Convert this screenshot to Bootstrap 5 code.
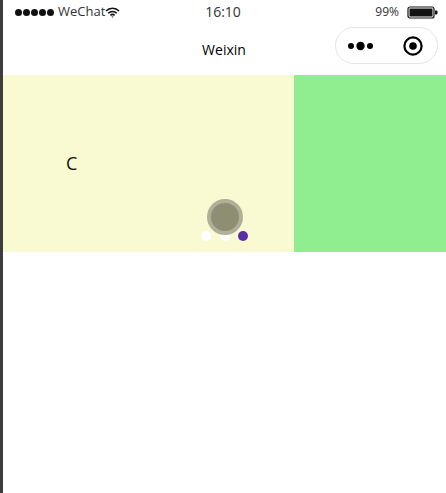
<!DOCTYPE html>
<html lang="en">
<head>
    <meta charset="UTF-8">
    <meta name="viewport" content="width=device-width, initial-scale=1">
    <title>Weixin</title>
    <link rel="stylesheet" href="https://cdn.jsdelivr.net/npm/bootstrap@5.3.0/dist/css/bootstrap.min.css">
    <style>
        html, body { height: 100%; }
        body { font-family: "Open Sans", "Noto Sans", sans-serif; color: #111; background: #fff; overflow: hidden; }
        .phone { height: 493px; border-left: 3px solid #3d3d3d; }
        .status-bar { height: 24px; font-size: 13px; color: #333; padding: 0 8px 0 12px; }
        .signal { gap: 1px; }
        .signal i { width: 7px; height: 7px; border-radius: 50%; background: #111; display: block; }
        .status-time { left: 0; right: 0; top: 0; line-height: 24px; font-size: 14px; margin-left: -3px; }
        .batt-pct { font-size: 12px; }
        .nav-bar { height: 51px; }
        .nav-title { font-size: 14px; line-height: 52px; margin-left: -1px; color: #000; }
        .capsule { right: 8px; top: 3px; width: 103px; height: 37px; border: 1px solid #e4e4e4; border-radius: 19px; padding: 0 14px 0 11px; }
        .swiper-box { height: 177px; }
        .slide-a { width: 291px; background: #fafad2; font-size: 18px; padding: 76px 0 0 63px; line-height: 24px; color: #111; }
        .slide-b { background: #90ee90; }
        .swiper-dots { left: 198px; top: 156px; gap: 8.5px; }
        .swiper-dots i { width: 10px; height: 10px; border-radius: 50%; background: #fff; display: block; }
        .swiper-dots i.on { background: #5a2ea6; }
        .touch-spot { left: 204px; top: 124px; width: 36px; height: 36px; border-radius: 50%; background: #8e8e72; border: 4px solid #b0b09a; }
    </style>
</head>
<body>
    <div class="phone">
        <div class="status-bar d-flex align-items-center position-relative">
            <div class="signal d-flex"><i></i><i></i><i></i><i></i><i></i></div>
            <span class="ms-1">WeChat</span>
            <svg width="15" height="11" viewBox="0 0 15 11" fill="none" stroke="#111" stroke-width="1.6"><path d="M1 4a9 9 0 0 1 13 0"/><path d="M3.2 6.3a6 6 0 0 1 8.6 0"/><path d="M5.4 8.4a3 3 0 0 1 4.2 0"/><path d="M6.4 9.6l1.1 1.1 1.1-1.1z" fill="#111" stroke="none"/></svg>
            <div class="status-time position-absolute text-center">16:10</div>
            <div class="ms-auto d-flex align-items-center batt-wrap">
                <span class="batt-pct me-2">99%</span>
                <svg width="31" height="13" viewBox="0 0 31 13"><rect x="1" y="1" width="26" height="11" rx="2" fill="none" stroke="#111" stroke-width="1.2"/><rect x="2.5" y="2.5" width="23" height="8" fill="#111"/><path d="M28 4.5h1.5a1 1 0 0 1 1 1v2a1 1 0 0 1-1 1H28z" fill="#111"/></svg>
            </div>
        </div>
        <div class="nav-bar position-relative">
            <div class="nav-title text-center">Weixin</div>
            <div class="capsule position-absolute bg-white d-flex align-items-center justify-content-between">
                <svg width="27" height="10" viewBox="0 0 27 10" fill="#000"><circle cx="4" cy="5" r="3"/><circle cx="13.5" cy="5" r="4.2"/><circle cx="23" cy="5" r="3"/></svg>
                <svg width="20" height="20" viewBox="0 0 20 20"><circle cx="10" cy="10" r="8.6" fill="none" stroke="#000" stroke-width="2.2"/><circle cx="10" cy="10" r="3.8" fill="#000"/></svg>
            </div>
        </div>
        <div class="swiper-box position-relative d-flex">
            <div class="slide-a">C</div>
            <div class="slide-b flex-grow-1"></div>
            <div class="swiper-dots position-absolute d-flex"><i></i><i></i><i class="on"></i></div>
            <div class="touch-spot position-absolute"></div>
        </div>
    </div>
    <script src="https://cdn.jsdelivr.net/npm/bootstrap@5.3.0/dist/js/bootstrap.bundle.min.js"></script>
</body>
</html>
